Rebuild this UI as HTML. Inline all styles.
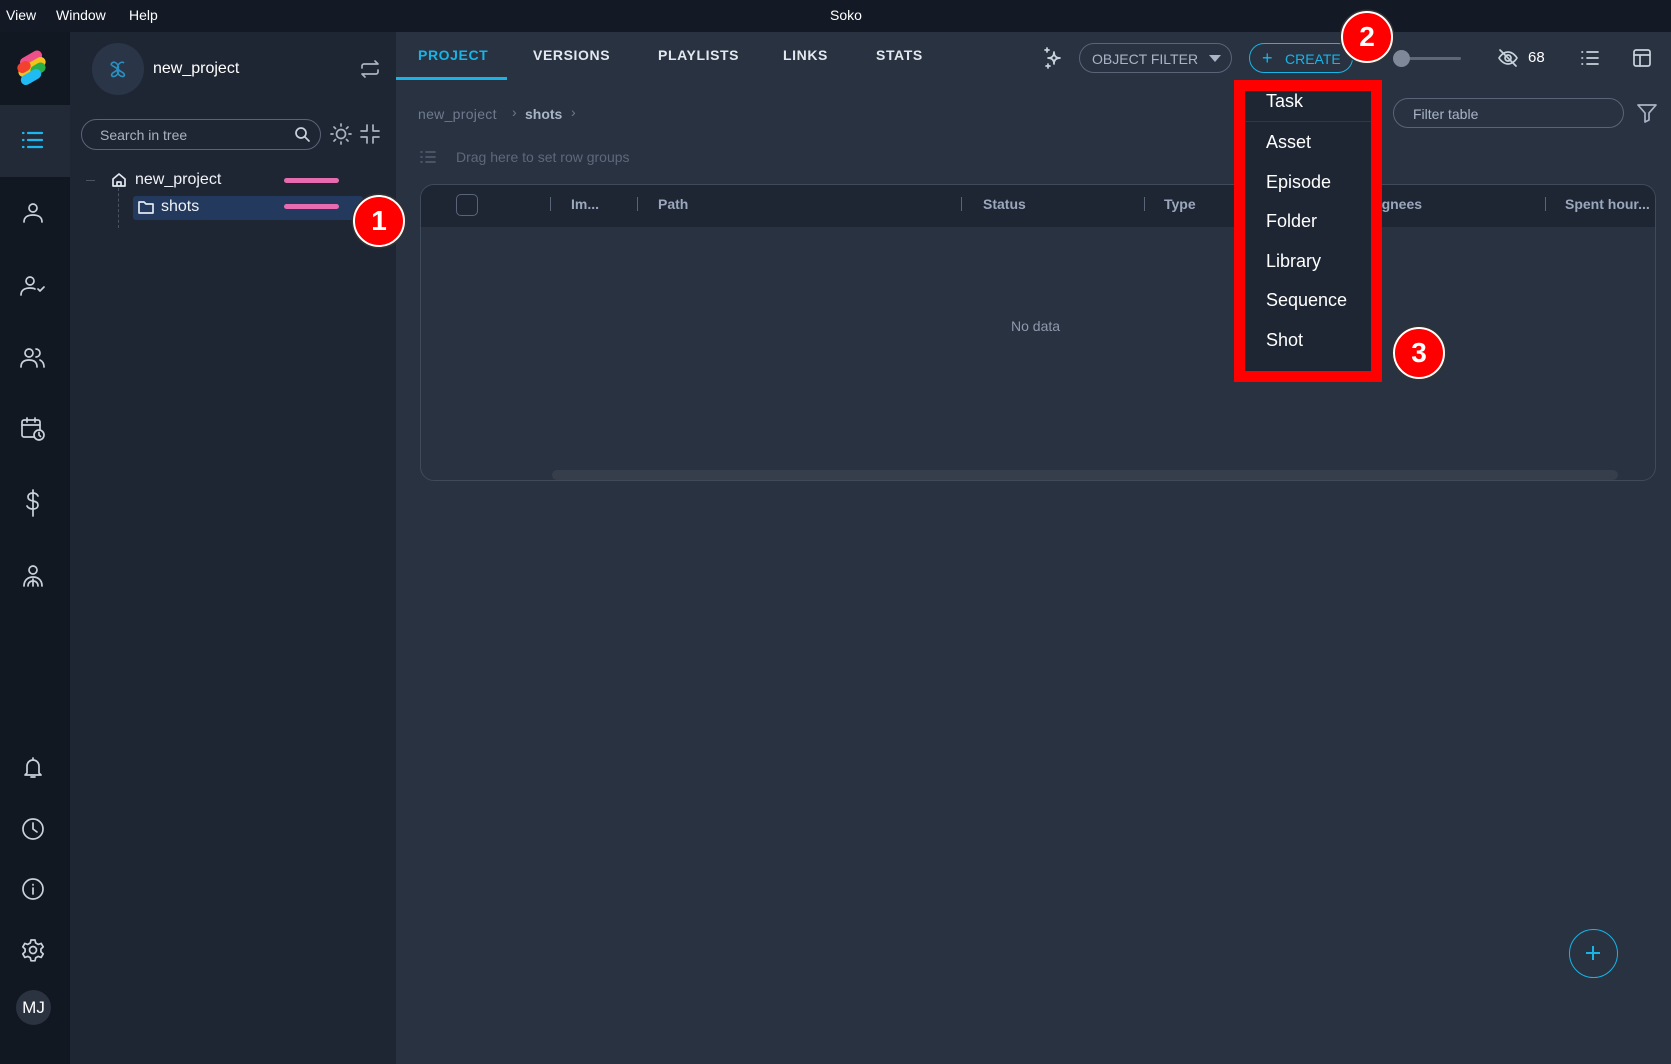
<!DOCTYPE html>
<html><head><meta charset="utf-8"><style>
*{margin:0;padding:0;box-sizing:border-box}
body{width:1671px;height:1064px;overflow:hidden;background:#283241;font-family:"Liberation Sans",sans-serif;position:relative;color:#fff}
.a{position:absolute}
.t{position:absolute;white-space:nowrap}
svg{position:absolute;overflow:visible}
.ic{fill:none;stroke:#c9d1dc;stroke-width:1.7;stroke-linecap:round;stroke-linejoin:round}
.tab{position:absolute;top:47px;font-weight:bold;font-size:14px;letter-spacing:.6px;color:#e3e8ef}
.badge{position:absolute;width:52px;height:52px;border-radius:50%;background:#f00;border:2px solid #fff;box-shadow:0 0 0 1.5px #333;color:#fff;font-weight:bold;font-size:28px;text-align:center;line-height:48px}
.mi{position:absolute;left:1266px;font-size:18px;color:#fff}
.col{position:absolute;top:196px;font-size:14px;font-weight:bold;color:#9aa7bd}
.sep{position:absolute;top:197px;width:1px;height:14px;background:#5a6478}
</style></head><body>
<div class="a" style="left:0;top:0;width:1671px;height:32px;background:#131a26"></div>
<div class="t" style="left:6px;top:7px;font-size:14px">View</div>
<div class="t" style="left:56px;top:7px;font-size:14px">Window</div>
<div class="t" style="left:129px;top:7px;font-size:14px">Help</div>
<div class="t" style="left:830px;top:7px;font-size:14px">Soko</div>
<svg width="0" height="0" style="left:0;top:0"><g fill="none" stroke="#fff" stroke-width="1.3"><path d="M1545 14h12"/><rect x="1596" y="9" width="11" height="11"/><path d="M1647 9l11 11M1658 9l-11 11"/></g></svg>
<div class="a" style="left:0;top:32px;width:70px;height:1032px;background:#121821"></div>
<div class="a" style="left:0;top:105px;width:70px;height:72px;background:#222a37"></div>
<svg width="40" height="40" style="left:14px;top:48px"><rect x="5" y="6" width="24" height="10" rx="5" transform="rotate(-30 17 11)" fill="#f0508a"/><rect x="3" y="14" width="30" height="10" rx="5" transform="rotate(-30 18 19)" fill="#f3c21c"/><rect x="3" y="14" width="14" height="10" rx="5" transform="rotate(-30 10 19)" fill="#f3412f"/><rect x="16" y="16" width="16" height="10" rx="5" transform="rotate(-30 24 21)" fill="#28b04a"/><rect x="6" y="24" width="22" height="10" rx="5" transform="rotate(-30 17 29)" fill="#1fbbf2"/></svg>
<svg width="24" height="24" style="left:21px;top:128px"><g stroke="#1ab8ef" stroke-width="2.2" stroke-linecap="round"><path d="M7 5h14M7 12h14M7 19h14M2 5h.5M2 12h.5M2 19h.5"/></g></svg>
<svg width="24" height="24" class="ic" style="left:21px;top:201px"><circle cx="12" cy="7" r="4"/><path d="M3 21c0-5 4-7 9-7s9 2 9 7"/></svg>
<svg width="28" height="24" class="ic" style="left:19px;top:274px"><circle cx="11" cy="7" r="4"/><path d="M2 21c0-5 4-7 9-7 2 0 4 .4 5 1M19 15l2 2 4-4"/></svg>
<svg width="28" height="24" class="ic" style="left:19px;top:346px"><circle cx="10" cy="7" r="4"/><path d="M2 21c0-5 3-7 8-7s8 2 8 7M17 3a4 4 0 010 8M21 14c2 1 4 3 4 7"/></svg>
<svg width="28" height="28" class="ic" style="left:20px;top:416px"><rect x="2" y="4" width="18" height="17" rx="2"/><path d="M2 9h18M7 2v4M15 2v4"/><circle cx="19" cy="19" r="5" fill="#121821"/><path d="M19 16.5v2.5l1.5 1.5"/></svg>
<svg width="24" height="28" class="ic" style="left:21px;top:489px"><path d="M17 7c-1-2-3-3-5-3-3 0-5 1.5-5 4s2 3.5 5 4 5 1.5 5 4-2 4-5 4-5-1-6-3M12 1v26"/></svg>
<svg width="24" height="24" class="ic" style="left:21px;top:564px"><circle cx="12" cy="6" r="4"/><path d="M3 22c0-6 4-9 9-9s9 3 9 9M12 15v7M7 22c0-3 2-5 5-5s5 2 5 5"/></svg>
<svg width="24" height="24" class="ic" style="left:21px;top:756px"><path d="M6 17V10a6 6 0 0112 0v7l2 2H4zM10 21h4M12 2v2"/></svg>
<svg width="24" height="24" class="ic" style="left:21px;top:817px"><circle cx="12" cy="12" r="10"/><path d="M12 6v6l4 3"/></svg>
<svg width="24" height="24" class="ic" style="left:21px;top:877px"><circle cx="12" cy="12" r="10"/><path d="M12 11v6M12 7.5v.5"/></svg>
<svg width="24" height="24" class="ic" style="left:21px;top:938px"><circle cx="12" cy="12" r="3.5"/><path d="M10 2h4l.7 3 2.5 1.4 3-1 2 3.5-2.3 2.1v2.8l2.3 2.1-2 3.5-3-1-2.5 1.4-.7 3h-4l-.7-3-2.5-1.4-3 1-2-3.5 2.3-2.1v-2.8L1.8 8.9l2-3.5 3 1L9.3 5z"/></svg>
<div class="a" style="left:16px;top:990px;width:35px;height:35px;border-radius:50%;background:#2b3340;color:#fff;font-size:17px;text-align:center;line-height:35px">MJ</div>
<div class="a" style="left:70px;top:32px;width:326px;height:1032px;background:#1f2633"></div>
<div class="a" style="left:92px;top:43px;width:52px;height:52px;border-radius:50%;background:#2a3548"></div>
<svg width="20" height="20" style="left:108px;top:59px" fill="none" stroke="#2a8fbf" stroke-width="1.6"><path d="M4 4c3-3 8 3 6 6s-8 4-6 7c2 2 8-2 6-6S1 7 4 4z"/><path d="M16 4c-3-3-8 3-6 6s8 4 6 7c-2 2-8-2-6-6"/></svg>
<div class="t" style="left:153px;top:60px;font-size:16px">new_project</div>
<svg width="22" height="22" class="ic" style="left:359px;top:58px;stroke:#aab3c0"><path d="M3 10V8a2 2 0 012-2h14l-3-3M19 12v2a2 2 0 01-2 2H3l3 3"/></svg>
<div class="a" style="left:81px;top:119px;width:240px;height:31px;border:1px solid #596477;border-radius:16px"></div>
<div class="t" style="left:100px;top:127px;font-size:14px;color:#a9b2bf">Search in tree</div>
<svg width="18" height="18" class="ic" style="left:294px;top:126px"><circle cx="7" cy="7" r="5"/><path d="M11 11l4 4"/></svg>
<svg width="22" height="22" class="ic" style="left:330px;top:123px;stroke:#aab3c0"><circle cx="11" cy="11" r="4.5"/><path d="M11 1v2M11 19v2M1 11h2M19 11h2M4 4l1.5 1.5M16.5 16.5L18 18M4 18l1.5-1.5M16.5 5.5L18 4"/></svg>
<svg width="20" height="20" class="ic" style="left:360px;top:124px;stroke:#aab3c0"><path d="M7 1v6H1M13 1v6h6M7 19v-6H1M13 19v-6h6"/></svg>
<div class="a" style="left:86px;top:180px;width:9px;height:1px;background:#4a5364"></div>
<div class="a" style="left:118px;top:188px;width:1px;height:40px;border-left:1px dashed #4a5364"></div>
<svg width="16" height="16" class="ic" style="left:111px;top:172px;stroke:#e3e8ef"><path d="M2 7l6-5 6 5v7H2zM6 14v-4h4v4"/></svg>
<div class="t" style="left:135px;top:171px;font-size:16px;color:#f0f3f7">new_project</div>
<div class="a" style="left:284px;top:178px;width:55px;height:5px;border-radius:3px;background:#e66bb0"></div>
<div class="a" style="left:133px;top:196px;width:230px;height:24px;border-radius:3px;background:#233a5e"></div>
<svg width="16" height="16" class="ic" style="left:138px;top:199px;stroke:#e3e8ef"><path d="M1 3h5l2 2h7v9H1z"/></svg>
<div class="t" style="left:161px;top:198px;font-size:16px;color:#f0f3f7">shots</div>
<div class="a" style="left:284px;top:204px;width:55px;height:5px;border-radius:3px;background:#e66bb0"></div>
<svg width="0" height="0" style="left:0;top:0"><path d="M396 32H1012L993 80H396z" fill="#1f2633"/></svg>
<div class="tab" style="left:418px;color:#18b4e6">PROJECT</div>
<div class="a" style="left:396px;top:77px;width:111px;height:3px;background:#18b4e6"></div>
<div class="tab" style="left:533px">VERSIONS</div>
<div class="tab" style="left:658px">PLAYLISTS</div>
<div class="tab" style="left:783px">LINKS</div>
<div class="tab" style="left:876px">STATS</div>
<svg width="22" height="22" class="ic" style="left:1042px;top:47px"><path d="M12 5c0 4 2 6 6 6-4 0-6 2-6 6 0-4-2-6-6-6 4 0 6-2 6-6zM5 1v4M3 3h4M6 17v4M4 19h4"/></svg>
<div class="a" style="left:1079px;top:43px;width:153px;height:30px;border:1px solid #5a6478;border-radius:15px"></div>
<div class="t" style="left:1092px;top:51px;font-size:14px;color:#a9b4c6">OBJECT FILTER</div>
<svg width="12" height="8" style="left:1209px;top:55px"><path d="M0 0h12L6 7z" fill="#a9b4c6"/></svg>
<div class="a" style="left:1249px;top:43px;width:104px;height:30px;border:1px solid #18b4e6;border-radius:15px"></div>
<div class="t" style="left:1262px;top:48px;font-size:18px;color:#18b4e6">+</div>
<div class="t" style="left:1285px;top:51px;font-size:14px;color:#18b4e6">CREATE</div>
<div class="a" style="left:1395px;top:57px;width:66px;height:3px;border-radius:2px;background:#5d6778"></div>
<div class="a" style="left:1393px;top:50px;width:17px;height:17px;border-radius:50%;background:#7e8898"></div>
<svg width="22" height="22" class="ic" style="left:1497px;top:47px"><path d="M2 11s3.5-6 9-6 9 6 9 6-3.5 6-9 6-9-6-9-6z"/><circle cx="11" cy="11" r="3"/><path d="M3 3l16 16"/></svg>
<div class="t" style="left:1528px;top:49px;font-size:15px;color:#fff">68</div>
<svg width="20" height="20" class="ic" style="left:1580px;top:48px"><path d="M7 4h11M7 10h11M7 16h11M2 4h.5M2 10h.5M2 16h.5"/></svg>
<svg width="20" height="20" class="ic" style="left:1632px;top:48px"><rect x="2" y="2" width="16" height="16" rx="2"/><path d="M2 7h16M8 7v11"/></svg>
<div class="t" style="left:418px;top:106px;font-size:14px;color:#6f7a8c;letter-spacing:.3px">new_project</div>
<div class="t" style="left:512px;top:104px;font-size:14px;color:#6f7a8c">›</div>
<div class="t" style="left:525px;top:106px;font-size:14px;color:#a9b4c6;font-weight:bold">shots</div>
<div class="t" style="left:571px;top:104px;font-size:14px;color:#6f7a8c">›</div>
<div class="a" style="left:1393px;top:98px;width:231px;height:30px;border:1px solid #5a6478;border-radius:15px"></div>
<div class="t" style="left:1413px;top:106px;font-size:14px;color:#a9b4c6">Filter table</div>
<svg width="20" height="20" class="ic" style="left:1637px;top:103px;stroke:#a9b4c6"><path d="M1 2h18l-7 8v7l-4 2v-9z"/></svg>
<svg width="16" height="14" class="ic" style="left:420px;top:150px;stroke:#4f5a6c"><path d="M6 2h9M6 7h9M6 12h9M1 2h1M1 7h1M1 12h1"/></svg>
<div class="t" style="left:456px;top:149px;font-size:14px;color:#5d687a">Drag here to set row groups</div>
<div class="a" style="left:420px;top:184px;width:1236px;height:297px;border:1px solid #3f4a5b;border-radius:14px;overflow:hidden">
<div class="a" style="left:0;top:0;width:1236px;height:42px;background:#1f2633"></div>
<div class="a" style="left:131px;top:285px;width:1066px;height:10px;border-radius:5px;background:#363e4c"></div>
</div>
<div class="a" style="left:456px;top:194px;width:22px;height:22px;border:1px solid #5a6478;border-radius:5px"></div>
<div class="sep" style="left:550px"></div><div class="sep" style="left:637px"></div><div class="sep" style="left:961px"></div><div class="sep" style="left:1144px"></div><div class="sep" style="left:1545px"></div>
<div class="col" style="left:571px">Im...</div>
<div class="col" style="left:658px">Path</div>
<div class="col" style="left:983px">Status</div>
<div class="col" style="left:1164px">Type</div>
<div class="col" style="left:1352px">Assignees</div>
<div class="col" style="left:1565px">Spent hour...</div>
<div class="t" style="left:1011px;top:318px;font-size:14px;color:#8e99ab">No data</div>
<div class="a" style="left:1234px;top:80px;width:148px;height:302px;border:11px solid #f00"></div>
<div class="a" style="left:1245px;top:91px;width:126px;height:280px;background:#1f2633"></div>
<div class="a" style="left:1245px;top:121px;width:126px;height:1px;background:#2f3847"></div>
<div class="mi" style="top:91px">Task</div>
<div class="mi" style="top:132px">Asset</div>
<div class="mi" style="top:172px">Episode</div>
<div class="mi" style="top:211px">Folder</div>
<div class="mi" style="top:251px">Library</div>
<div class="mi" style="top:290px">Sequence</div>
<div class="mi" style="top:330px">Shot</div>
<div class="badge" style="left:353px;top:195px">1</div>
<div class="badge" style="left:1341px;top:11px">2</div>
<div class="badge" style="left:1393px;top:327px">3</div>
<div class="a" style="left:1569px;top:929px;width:49px;height:49px;border-radius:50%;border:1.5px solid #18b4e6"></div>
<svg width="16" height="16" style="left:1585px;top:945px" stroke="#18b4e6" stroke-width="2"><path d="M8 1v14M1 8h14"/></svg>
</body></html>
